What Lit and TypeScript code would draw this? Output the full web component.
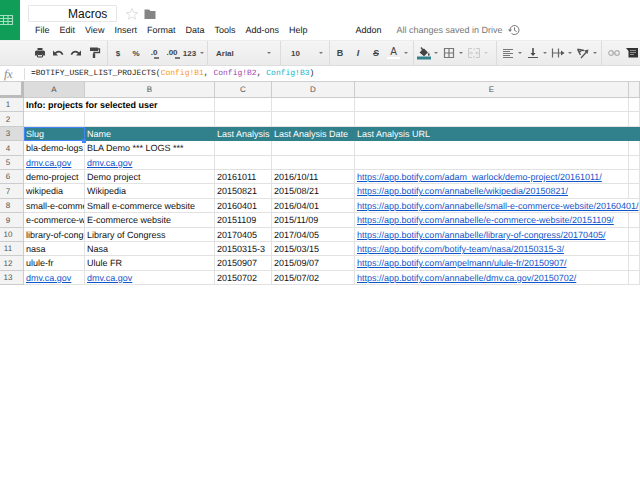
import { LitElement, html, css, svg, nothing, TemplateResult } from "lit";
import { customElement, property, state } from "lit/decorators.js";
import { classMap } from "lit/directives/class-map.js";

const ICONS: Record<string, TemplateResult> = {
  print: svg`<path d="M4.500 2h5v2h-5z" fill="#444"/><path d="M3.500 4.500h7a1.500 1.500 0 0 1 1.500 1.500v3.500h-2V8H4v1.500H2V6a1.500 1.500 0 0 1 1.500-1.500z" fill="#444"/><path d="M4.500 8.500h5V11h-5z" fill="#ddd" stroke="#444"/>`,
  undo: svg`<path d="M2 4.500v5h5z" fill="#444"/><path d="M4 7.500C6.500 4.700 10 5 11.700 8.700" fill="none" stroke="#444" stroke-width="1.700"/>`,
  redo: svg`<path d="M12 4.500v5H7z" fill="#444"/><path d="M10 7.500C7.500 4.700 4 5 2.300 8.700" fill="none" stroke="#444" stroke-width="1.700"/>`,
  paint: svg`<path d="M3 1.500h8v3.500H3z" fill="#444"/><path d="M11 3h1.500v3.500H7V8" fill="none" stroke="#444" stroke-width="1.300"/><path d="M5.800 7.500h2.400V12H5.800z" fill="#444"/>`,
  fill: svg`<path d="M4.500 1 6 3l1-.5L11 6.500 7 10.300 2.500 6.500 5 4 3.500 2z" fill="#444"/><path d="M11.800 6.500q1.700 2.500 0 3.500-1.700-1 0-3.500z" fill="#444"/><path d="M0 10.500h14.500v3H0z" fill="#31818c"/>`,
  borders: svg`<path d="M2.500 2.500h9v9h-9zM7 2.500v9M2.500 7h9" fill="none" stroke="#777" stroke-width="1.200"/>`,
  merge: svg`<path d="M5 2.500H1.500v9H5M9 2.500h3.500v9H9M1.500 7H5M12.500 7H9M4 5.500 5.500 7 4 8.500M10 5.500 8.500 7 10 8.500M7 2v2M7 10v2" fill="none" stroke="#cacaca"/>`,
  align: svg`<path d="M2 3.500h10M2 5.500h7M2 7.500h10M2 9.500h7M2 11.500h10" stroke="#777" fill="none"/>`,
  valign: svg`<path d="M7 2v6" stroke="#444" stroke-width="1.500"/><path d="M4.500 7h5L7 10z" fill="#444"/><path d="M2 11.500h10" stroke="#555"/>`,
  wrap: svg`<path d="M1.500 2.500v9M7.500 2.500v9M2 7h9" stroke="#666" stroke-width="1.200" fill="none"/><path d="M10 4.500 13.500 7 10 9.500z" fill="#555"/>`,
  rotate: svg`<path d="M1.500 3.200 4.500 9M1.500 3.200 8 4.500M3 6.500l3-2.500" fill="none" stroke="#555" stroke-width="1.400"/><path d="M5 12l5.500-6" fill="none" stroke="#555" stroke-width="1.300"/><path d="M8 4.500 12.500 3.500 11.500 8z" fill="#555"/>`,
  link: svg`<circle cx="4" cy="7" r="2.300" fill="none" stroke="#b0b0b0" stroke-width="1.200"/><circle cx="10" cy="7" r="2.300" fill="none" stroke="#b0b0b0" stroke-width="1.200"/><path d="M5.500 7h3" stroke="#b0b0b0"/>`,
  comment: svg`<path d="M1 2h12v9.500H3.500V5z" fill="#333"/><path d="M5 4.500h6M5 6.500h6M5 8.500h4" stroke="#aaa" stroke-width=".8"/>`,
  star: svg`<path d="M7 1.500 8.600 5.300l4 .3-3.100 2.600 1 4L7 10l-3.500 2.200 1-4L1.400 5.600l4-.3z" fill="#fff" stroke="#ddd" stroke-width=".9"/>`,
  folder: svg`<path d="M1.500 2.500H6L7.500 4h5v8h-11z" fill="#858585"/>`,
  clock: svg`<path d="M3 7a4.500 4.500 0 1 1 1.500 3.400" fill="none" stroke="#777"/><path d="M1 6.500h4L3 9z" fill="#777"/><path d="M7.500 4.500V7.300l2 1.200" fill="none" stroke="#777"/>`,
  sheet: svg`<path d="M-1 2.500h13.500v9H-1M-1 5.500h13.500M-1 8.500h13.500M3.500 2.500v9M8 2.500v9" fill="none" stroke="#a8dfc0" stroke-width="1.100"/>`,
};

const icon = (name: string) =>
  html`<svg width="14" height="14" viewBox="0 0 14 14" aria-hidden="true">${ICONS[name]}</svg>`;

interface Row {
  slug: string;
  name: string;
  analysis?: string;
  date?: string;
  path?: string;
}

const ROWS: Row[] = [
  { slug: "bla-demo-logs", name: "BLA Demo *** LOGS ***" },
  { slug: "dmv.ca.gov", name: "dmv.ca.gov" },
  { slug: "demo-project", name: "Demo project", analysis: "20161011", date: "2016/10/11", path: "adam_warlock/demo-project" },
  { slug: "wikipedia", name: "Wikipedia", analysis: "20150821", date: "2015/08/21", path: "annabelle/wikipedia" },
  { slug: "small-e-commerce-website", name: "Small e-commerce website", analysis: "20160401", date: "2016/04/01", path: "annabelle/small-e-commerce-website" },
  { slug: "e-commerce-website", name: "E-commerce website", analysis: "20151109", date: "2015/11/09", path: "annabelle/e-commerce-website" },
  { slug: "library-of-congress", name: "Library of Congress", analysis: "20170405", date: "2017/04/05", path: "annabelle/library-of-congress" },
  { slug: "nasa", name: "Nasa", analysis: "20150315-3", date: "2015/03/15", path: "botify-team/nasa" },
  { slug: "ulule-fr", name: "Ulule FR", analysis: "20150907", date: "2015/09/07", path: "ampelmann/ulule-fr" },
  { slug: "dmv.ca.gov", name: "dmv.ca.gov", analysis: "20150702", date: "2015/07/02", path: "annabelle/dmv.ca.gov" },
];

const MENUS = ["File", "Edit", "View", "Insert", "Format", "Data", "Tools", "Add-ons", "Help"];

@customElement("sheet-header")
class SheetHeader extends LitElement {
  static styles = css`
    :host { display: flex; height: 40px; background: #fff; }
    .logo { width: 20px; background: #0f9d58; display: flex; align-items: center; flex: none; }
    .main { flex: 1; min-width: 0; padding: 5px 0 0 8px; }
    .title { display: flex; align-items: center; gap: 4px; height: 17px; }
    input {
      box-sizing: border-box; width: 89px; height: 17px; margin-right: 4px; padding: 0 0 0 39px;
      border: 1px solid #e6e6e6; border-radius: 1px; font: 12px "Liberation Sans", Arial, sans-serif; color: #111;
    }
    button { border: 0; padding: 0; background: none; font: inherit; color: inherit; white-space: nowrap; text-rendering: inherit; }
    .icon { display: flex; width: 14px; height: 14px; }
    nav {
      display: flex; gap: 10px; align-items: center; height: 16px; padding-left: 7px;
      font: 9px/16px "Liberation Sans", Arial, sans-serif; color: #222;
    }
    .addon { margin: 0 5px 0 38px; }
    .saved { display: flex; align-items: center; gap: 4px; color: #777; white-space: nowrap; }
    svg { flex: none; display: block; }
  `;
  render() {
    return html`
      <div class="logo">${icon("sheet")}</div>
      <div class="main">
        <div class="title">
          <input aria-label="Document title" value="Macros" />
          <button class="icon" aria-label="Star">${icon("star")}</button>
          <button class="icon" aria-label="Move to folder">${icon("folder")}</button>
        </div>
        <nav>
          ${MENUS.map((m) => html`<button>${m}</button>`)}
          <button class="addon">Addon</button>
          <span class="saved">All changes saved in Drive ${icon("clock")}</span>
        </nav>
      </div>
    `;
  }
}

@customElement("tool-button")
class ToolButton extends LitElement {
  @property() label = "";
  @property() icon = "";
  @property({ type: Boolean }) menu = false;
  @property({ type: Boolean }) faded = false;
  static styles = css`
    :host { display: block; flex: none; }
    button {
      display: flex; align-items: center; border: 0; padding: 0; height: 24px; background: none;
      font: bold 8px "Liberation Sans", Arial, sans-serif; color: #444;
    }
    .face { display: flex; justify-content: center; align-items: center; width: 18px; }
    .menu .face { width: 17px; }
    .arrow { width: 8px; display: flex; justify-content: center; }
    .arrow::after { content: ""; border: 2px solid transparent; border-top-color: #777; border-bottom: 0; }
    .faded .arrow::after { border-top-color: #ccc; }
    svg { display: block; }
  `;
  render() {
    return html`<button class=${classMap({ menu: this.menu, faded: this.faded })} aria-label=${this.label}>
      <span class="face">${this.icon ? icon(this.icon) : html`<slot></slot>`}</span>
      ${this.menu ? html`<span class="arrow"></span>` : nothing}
    </button>`;
  }
}

@customElement("sheet-toolbar")
class SheetToolbar extends LitElement {
  static styles = css`
    :host {
      display: flex; height: 24px; overflow: hidden; background: linear-gradient(#f5f5f5, #ebebeb);
      border-top: 1px solid #ececec; border-bottom: 1px solid #ddd; color: #444;
    }
    .group { display: flex; flex: none; border-right: 1px solid #dcdcdc; padding: 0 4px 0 1px; }
    .first { padding-left: 31px; }
    .colors { padding-right: 6px; }
    .layout { padding: 0 2px; }
    .last { border: 0; padding: 0 0 0 3px; }
    .text { padding-right: 1px; }
    .styles { padding-right: 3px; }
    .pick { position: relative; padding: 0; }
    .pick::after {
      content: ""; position: absolute; right: 9px; top: 11px;
      border: 2px solid transparent; border-top-color: #777; border-bottom: 0;
    }
    select {
      appearance: none; border: 0; background: none; padding: 0 0 0 8px; width: 72px; height: 24px;
      font: bold 8px "Liberation Sans", Arial, sans-serif; color: #444;
    }
    .size select { width: 48px; padding-left: 10px; }
    .size::after { right: 6px; }
    .dec { position: relative; font-size: 8px; line-height: 8px; }
    .dec::after { content: ""; position: absolute; right: -2px; bottom: -2px; width: 5px; height: 2px; background: #777; }
    .strong { font-size: 9px; }
    .ital { font: italic bold 9px "Liberation Sans", Arial, sans-serif; }
    .strike { font: italic bold 9px "Liberation Sans", Arial, sans-serif; text-decoration: line-through; }
    .color { font: 10px/10px "Liberation Sans", Arial, sans-serif; border-bottom: 2px solid #fff; padding: 0 3px; }
  `;
  render() {
    return html`
      <div class="group first">
        <tool-button label="Print" icon="print"></tool-button>
        <tool-button label="Undo" icon="undo"></tool-button>
        <tool-button label="Redo" icon="redo"></tool-button>
        <tool-button label="Paint format" icon="paint"></tool-button>
      </div>
      <div class="group text">
        <tool-button label="Currency">$</tool-button>
        <tool-button label="Percent">%</tool-button>
        <tool-button label="Decrease decimals"><span class="dec">.0</span></tool-button>
        <tool-button label="Increase decimals"><span class="dec">.00</span></tool-button>
        <tool-button label="More formats" menu>123</tool-button>
      </div>
      <div class="group pick"><select aria-label="Font"><option>Arial</option></select></div>
      <div class="group pick size"><select aria-label="Font size"><option>10</option></select></div>
      <div class="group styles">
        <tool-button label="Bold"><span class="strong">B</span></tool-button>
        <tool-button label="Italic"><span class="ital">I</span></tool-button>
        <tool-button label="Strikethrough"><span class="strike">S</span></tool-button>
        <tool-button label="Text color" menu><span class="color">A</span></tool-button>
      </div>
      <div class="group colors">
        <tool-button label="Fill color" icon="fill" menu></tool-button>
        <tool-button label="Borders" icon="borders" menu></tool-button>
        <tool-button label="Merge cells" icon="merge" menu faded></tool-button>
      </div>
      <div class="group layout">
        <tool-button label="Horizontal align" icon="align" menu></tool-button>
        <tool-button label="Vertical align" icon="valign" menu></tool-button>
        <tool-button label="Text wrapping" icon="wrap" menu></tool-button>
        <tool-button label="Text rotation" icon="rotate" menu></tool-button>
      </div>
      <div class="group last">
        <tool-button label="Insert link" icon="link"></tool-button>
        <tool-button label="Insert comment" icon="comment"></tool-button>
      </div>
    `;
  }
}

@customElement("sheet-grid")
class SheetGrid extends LitElement {
  @state() private rows = ROWS;
  static styles = css`
    :host { display: block; }
    table {
      width: 100%; table-layout: fixed; border-collapse: separate; border-spacing: 0;
      font: 9px "Liberation Sans", Arial, sans-serif; color: #111;
    }
    .n { width: 24px; } .a { width: 61px; } .b { width: 130px; } .c { width: 57px; } .d { width: 83px; } .e { width: 274px; }
    th, td {
      box-sizing: border-box; height: 14px; line-height: 12px; padding: 1px 0 0 2px; text-align: left; font-weight: normal;
      white-space: nowrap; overflow: hidden; border-right: 1px solid #e2e2e2; border-bottom: 1px solid #e2e2e2;
    }
    tbody tr:nth-child(5n + 2) > *, tbody tr:nth-child(5n + 4) > * { height: 15px; line-height: 13px; }
    thead th {
      height: 17px; line-height: 15px; padding: 0; text-align: center; font-size: 8px; color: #555;
      background: #f3f3f3; border-color: #ccc; border-top: 1px solid #d0d0d0;
    }
    thead .active { background: #dcdcdc; }
    thead .corner { border-right: 3px solid #bbb; border-bottom: 3px solid #bbb; }
    tbody th { padding: 1px 7px 0 0; text-align: center; font-size: 8px; color: #555; background: #f3f3f3; border-color: #ccc; }
    tbody th.active { background: #dcdcdc; }
    .info { font-weight: bold; color: #000; }
    .heads td { background: #31818c; color: #fff; border-color: #31818c; }
    .heads td.selected { position: relative; overflow: visible; padding: 0 0 0 1px; border: 1px solid #4285f4; }
    .selected::after { content: ""; position: absolute; right: -2px; bottom: -3px; width: 4px; height: 4px; background: #4285f4; }
    a { color: #1155cc; text-decoration: underline; }
  `;
  private text(value: string) {
    return value === "dmv.ca.gov" ? html`<a href="http://dmv.ca.gov">${value}</a>` : value;
  }
  private row(r: Row, i: number) {
    const url = `https://app.botify.com/${r.path}/${r.analysis}/`;
    const spills = url.length > 64;
    return html`<tr>
      <th scope="row">${i + 4}</th>
      <td>${this.text(r.slug)}</td>
      <td>${this.text(r.name)}</td>
      <td>${r.analysis}</td>
      <td>${r.date}</td>
      <td colspan=${spills ? 2 : 1}>${r.path ? html`<a href=${url}>${url}</a>` : nothing}</td>
      ${spills ? nothing : html`<td></td>`}
    </tr>`;
  }
  render() {
    return html`<table>
      <colgroup>
        <col class="n" /><col class="a" /><col class="b" /><col class="c" /><col class="d" /><col class="e" /><col />
      </colgroup>
      <thead>
        <tr>
          <th class="corner"></th><th scope="col" class="active">A</th><th scope="col">B</th><th scope="col">C</th>
          <th scope="col">D</th><th scope="col">E</th><th></th>
        </tr>
      </thead>
      <tbody>
        <tr><th scope="row">1</th><td class="info" colspan="2">Info: projects for selected user</td><td></td><td></td><td></td><td></td></tr>
        <tr><th scope="row">2</th><td></td><td></td><td></td><td></td><td></td><td></td></tr>
        <tr class="heads">
          <th scope="row" class="active">3</th><td class="selected">Slug</td><td>Name</td><td>Last Analysis</td>
          <td>Last Analysis Date</td><td>Last Analysis URL</td><td></td>
        </tr>
        ${this.rows.map((r, i) => this.row(r, i))}
      </tbody>
    </table>`;
  }
}

@customElement("app-root")
class AppRoot extends LitElement {
  static styles = css`
    :host { display: block; min-height: 100vh; background: #fff; overflow: hidden; text-rendering: geometricPrecision; }
    .formula { display: flex; align-items: center; height: 15px; background: #fff; }
    .fx { box-sizing: border-box; width: 25px; padding-left: 4px; border-right: 1px solid #ddd; font: italic 12px/12px "Liberation Serif", serif; color: #888; }
    .code { flex: 1; padding-left: 6px; outline: 0; font: 8px/15px "Liberation Mono", monospace; color: #222; white-space: nowrap; }
    .one { color: #f7981d; }
    .two { color: #9c3fb0; }
    .three { color: #12b5cb; }
  `;
  render() {
    return html`
      <sheet-header></sheet-header>
      <sheet-toolbar></sheet-toolbar>
      <div class="formula">
        <span class="fx">fx</span>
        <div class="code" role="textbox" aria-label="Formula" contenteditable="true" spellcheck="false">=BOTIFY_USER_LIST_PROJECTS(<span class="one">Config!B1</span>, <span class="two">Config!B2</span>, <span class="three">Config!B3</span>)</div>
      </div>
      <sheet-grid></sheet-grid>
    `;
  }
}
